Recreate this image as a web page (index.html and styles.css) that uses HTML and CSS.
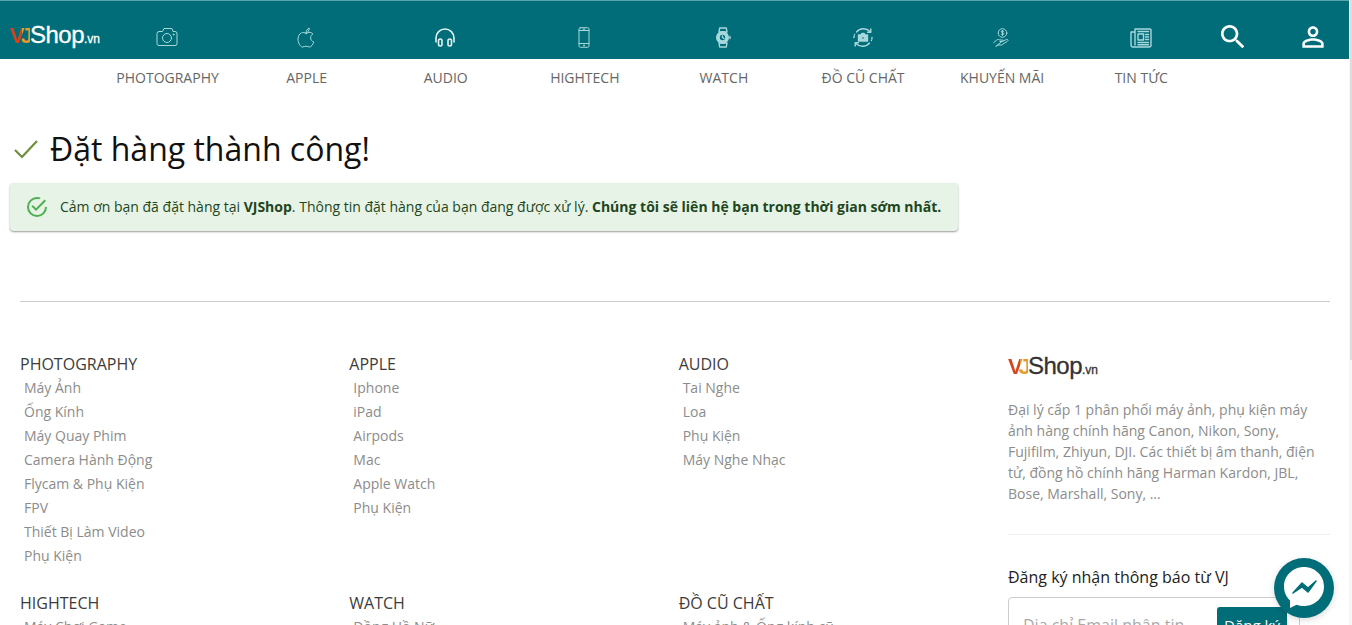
FILE: index.html
```html
<!DOCTYPE html>
<html lang="vi">
<head>
    <meta charset="UTF-8">
    <meta name="viewport" content="width=device-width, initial-scale=1.0">
    <title>Đặt hàng thành công - VJShop</title>
    <link rel="stylesheet" href="styles.css">
</head>
<body>
<div class="page">
    <div class="main">
        <header class="topbar">
            <a class="logo logo-light" href="#"><span class="logo-vj">VJ</span>Shop<small>.vn</small></a>
            <nav class="nav-icons">
                <a href="#"><svg class="icon" width="22" height="20" viewBox="0 0 22 20"><path d="M3 4.500h3.500l1.500-3h8l1 3h2a2 2 0 0 1 2 2v10a2 2 0 0 1-2 2H3a2 2 0 0 1-2-2v-10a2 2 0 0 1 2-2z"/><circle cx="11" cy="11" r="4.500"/><circle cx="17.500" cy="7.500" r=".5"/></svg></a>
                <a href="#"><svg class="icon" width="18" height="21" viewBox="0 0 18 21"><path d="M9 6.500c-1.500-1-3-1.300-4.500-.7C2.500 6.700 1 9 1 12c0 3.500 2.300 8 4.500 8 1.300 0 2-.8 3.500-.8s2.200.8 3.500.8c1.800 0 3.500-2.700 4.300-5-2-.8-3.200-2.300-3.200-4.200 0-1.600.9-3 2.300-3.800-1-1.300-2.400-1.800-3.800-1.600-1 .1-1.700.6-2.600 1.100z"/><path d="M9 6c0-2.200 1.200-4 3.200-5 .2 2.200-1 4.300-3.200 5z"/></svg></a>
                <a href="#"><svg class="icon icon-bold icon-bright" width="22" height="20" viewBox="0 0 22 20"><path d="M2 15v-4a9 9 0 0 1 18 0v4"/><rect x="4.500" y="12" width="3.500" height="7" rx="1.700"/><rect x="14" y="12" width="3.500" height="7" rx="1.700"/></svg></a>
                <a href="#"><svg class="icon" width="12" height="21" viewBox="0 0 12 21"><rect x="1" y=".7" width="10" height="19.600" rx="1.500"/><path d="M1 3.500h10M1 16.500h10M5 2.100h2"/><circle cx="6" cy="18.400" r=".6"/></svg></a>
                <a href="#"><svg class="icon icon-bold" width="16" height="21" viewBox="0 0 16 21"><path d="M4 5l.7-4h6.600l.7 4zM4 16l.7 4h6.600l.7-4z"/><circle cx="7.500" cy="10.500" r="5.800" fill="#a8d8dc"/><circle cx="7.500" cy="10.500" r="3.400" class="icon-face"/><path d="M7.500 9v1.500l1.300.8M15 9.500v2"/></svg></a>
                <a href="#"><svg class="icon icon-bold" width="22" height="21" viewBox="0 0 22 21"><path d="M4.500 5A9 9 0 0 1 18 4.500M17.500 16A9 9 0 0 1 4 16.500"/><path d="M18.800 2v3.200h-3.200M3.200 19v-3.200h3.200"/><path d="M2 10.500a9 9 0 0 1 .6-3M20 10.500a9 9 0 0 1-.6 3" stroke-dasharray="1.500 1.500"/><path d="M6.500 8h2.500l1-1.500h2l1 1.500h2.500v6h-9z" fill="#a8d8dc"/><circle cx="11" cy="11" r="1.500" class="icon-face"/></svg></a>
                <a href="#"><svg class="icon" width="17" height="19" viewBox="0 0 17 19"><circle cx="9.500" cy="5" r="4.300"/><path d="M9.500 2.500v5M8.200 6.300c.5.600 2.600.6 2.600-.6s-2.600-.9-2.600-2c0-1 2-1 2.600-.4"/><path d="M.8 14.500l3-2.500c1-.7 2-.7 3 0h2.700c1 0 1 1.500 0 1.500H7M9 13.500l4.500-2c1.500-.5 2.200 1 1 1.700L8.500 17H4.500l-1.500 1.300z"/></svg></a>
                <a href="#"><svg class="icon icon-bold" width="22" height="21" viewBox="0 0 22 21"><path d="M5 2h15a1 1 0 0 1 1 1v15a2 2 0 0 1-2 2H3a2 2 0 0 1-2-2V5h4zM5 5v13"/><path d="M8 4.500h10.500"/><rect x="8" y="7" width="5.500" height="6"/><path d="M15.500 7.500h3M15.500 10h3M15.500 12.500h3M8 15.500h10.500M8 17.700h10.500"/></svg></a>
            </nav>
            <div class="actions">
                <a href="#"><svg width="32" height="32" viewBox="0 0 24 24" fill="#fff"><path d="M15.500 14h-.79l-.28-.27C15.410 12.590 16 11.110 16 9.500 16 5.910 13.090 3 9.500 3S3 5.910 3 9.500 5.910 16 9.500 16c1.610 0 3.090-.59 4.230-1.570l.27.28v.79l5 4.990L20.490 19l-4.990-5zm-6 0C7.010 14 5 11.990 5 9.500S7.010 5 9.500 5 14 7.010 14 9.500 11.990 14 9.500 14z"/></svg></a>
                <a href="#"><svg width="32" height="32" viewBox="0 0 24 24" fill="#fff"><path d="M12 5.900c1.160 0 2.100.94 2.100 2.100s-.94 2.100-2.100 2.100S9.900 9.160 9.900 8s.94-2.100 2.100-2.100m0 9c2.970 0 6.100 1.460 6.100 2.100v1.100H5.900V17c0-.64 3.130-2.100 6.100-2.100M12 4C9.790 4 8 5.790 8 8s1.790 4 4 4 4-1.790 4-4-1.790-4-4-4zm0 9c-2.670 0-8 1.340-8 4v3h16v-3c0-2.660-5.330-4-8-4z"/></svg></a>
            </div>
        </header>
        <div class="nav-labels">
            <a href="#">PHOTOGRAPHY</a>
            <a href="#">APPLE</a>
            <a href="#">AUDIO</a>
            <a href="#">HIGHTECH</a>
            <a href="#">WATCH</a>
            <a href="#">ĐỒ CŨ CHẤT</a>
            <a href="#">KHUYẾN MÃI</a>
            <a href="#">TIN TỨC</a>
        </div>

        <section class="result">
            <h1><svg class="title-check" width="24" height="20" viewBox="0 0 24 20"><path d="M1 11l7 7L23 2"/></svg>Đặt hàng thành công!</h1>
            <div class="alert">
                <svg width="24" height="24" viewBox="0 0 24 24" fill="#4caf50"><path d="M20,12A8,8 0 0,1 12,20A8,8 0 0,1 4,12A8,8 0 0,1 12,4C12.760,4 13.500,4.110 14.200,4.310L15.770,2.740C14.610,2.260 13.340,2 12,2A10,10 0 0,0 2,12A10,10 0 0,0 12,22A10,10 0 0,0 22,12M7.910,10.080L6.500,11.500L11,16L21,6L19.590,4.580L11,13.170L7.910,10.080Z"/></svg>
                <p>Cảm ơn bạn đã đặt hàng tại <b>VJShop</b>. Thông tin đặt hàng của bạn đang được xử lý. <b>Chúng tôi sẽ liên hệ bạn trong thời gian sớm nhất.</b></p>
            </div>
        </section>

        <footer class="footer">
            <div class="footer-menu">
                <div class="menu-col">
                    <h4>PHOTOGRAPHY</h4>
                    <a href="#">Máy Ảnh</a>
                    <a href="#">Ống Kính</a>
                    <a href="#">Máy Quay Phim</a>
                    <a href="#">Camera Hành Động</a>
                    <a href="#">Flycam &amp; Phụ Kiện</a>
                    <a href="#">FPV</a>
                    <a href="#">Thiết Bị Làm Video</a>
                    <a href="#">Phụ Kiện</a>
                </div>
                <div class="menu-col">
                    <h4>APPLE</h4>
                    <a href="#">Iphone</a>
                    <a href="#">iPad</a>
                    <a href="#">Airpods</a>
                    <a href="#">Mac</a>
                    <a href="#">Apple Watch</a>
                    <a href="#">Phụ Kiện</a>
                </div>
                <div class="menu-col">
                    <h4>AUDIO</h4>
                    <a href="#">Tai Nghe</a>
                    <a href="#">Loa</a>
                    <a href="#">Phụ Kiện</a>
                    <a href="#">Máy Nghe Nhạc</a>
                </div>
                <div class="menu-col">
                    <h4>HIGHTECH</h4>
                    <a href="#">Máy Chơi Game</a>
                </div>
                <div class="menu-col">
                    <h4>WATCH</h4>
                    <a href="#">Đồng Hồ Nữ</a>
                </div>
                <div class="menu-col">
                    <h4>ĐỒ CŨ CHẤT</h4>
                    <a href="#">Máy ảnh &amp; Ống kính cũ</a>
                </div>
            </div>
            <aside class="footer-side">
                <a class="logo logo-dark" href="#"><span class="logo-vj">VJ</span>Shop<small>.vn</small></a>
                <p class="about">Đại lý cấp 1 phân phối máy ảnh, phụ kiện máy ảnh hàng chính hãng Canon, Nikon, Sony, Fujifilm, Zhiyun, DJI. Các thiết bị âm thanh, điện tử, đồng hồ chính hãng Harman Kardon, JBL, Bose, Marshall, Sony, ...</p>
                <hr>
                <div class="subscribe-title">Đăng ký nhận thông báo từ VJ</div>
                <form class="subscribe">
                    <input type="text" placeholder="Địa chỉ Email nhận tin">
                    <button type="button">Đăng ký</button>
                </form>
            </aside>
        </footer>

        <a class="messenger" href="#">
            <svg width="46" height="46" viewBox="0 0 46 46"><path fill="#fff" d="M23 2C12 2 3 10.500 3 21.500c0 5.500 2.200 10.500 6 14V43l6.500-3.300c2.300.8 4.800 1.300 7.500 1.300 11 0 20-8.500 20-19.500S34 2 23 2z"/><path fill="#006d79" stroke="#006d79" stroke-width="1.500" stroke-linejoin="round" d="M12 28l9-10 6 5 8-7-8 11-6-5z"/></svg>
        </a>
    </div>
    <div class="scrollbar"><div class="thumb"></div></div>
</div>
</body>
</html>
```

FILE: styles.css
```css
html, body {
    margin: 0;
    padding: 0;
    height: 100%;
    overflow: hidden;
    background-color: #fff;
}
body {
    font-family: "Open Sans", Arial, sans-serif;
    font-size: 14px;
    color: #222;
}
a {
    text-decoration: none;
    color: inherit;
}
.page {
    display: flex;
    height: 625px;
    overflow: hidden;
}
.main {
    position: relative;
    width: 1349px;
    flex: none;
}
.scrollbar {
    width: 3px;
    background-color: #f6f6f6;
}
.thumb {
    height: 360px;
    margin-left: 1px;
    background-color: #ddd;
}

/* header */
.topbar {
    display: flex;
    align-items: center;
    box-sizing: border-box;
    height: 59px;
    padding-top: 14px;
    background-color: #006d79;
    border-top: 1px solid #5da3ab;
}
.logo {
    display: block;
    font-family: "Liberation Sans", Arial, sans-serif;
    font-size: 24px;
    line-height: 26px;
    letter-spacing: -0.5px;
    white-space: nowrap;
    -webkit-text-stroke: 0.3px currentColor;
}
.logo small {
    font-size: 12px;
    letter-spacing: 0;
}
.logo-vj {
    font-size: 22px;
    font-weight: 700;
    letter-spacing: -4px;
    padding-right: 1px;
    color: transparent;
    -webkit-text-stroke: 0;
    background: linear-gradient(90deg, #d8431b 58%, #e59a2b 62%);
    -webkit-background-clip: text;
    background-clip: text;
}
.logo-light {
    width: 87.5px;
    padding-left: 10px;
    color: #fff;
    flex: none;
}
.logo-dark {
    color: #333;
}
.nav-icons {
    display: grid;
    grid-template-columns: repeat(8, 139.1px);
    flex: none;
}
.nav-icons a {
    display: flex;
    justify-content: center;
    align-items: center;
}
.icon {
    fill: none;
    stroke: #a8d8dc;
    stroke-width: 1;
    stroke-linecap: round;
    stroke-linejoin: round;
}
.icon-bold {
    stroke-width: 1.4;
}
.icon-bright {
    stroke: #e2f3f4;
    stroke-width: 1.6;
}
.icon-face {
    fill: #006d79;
}
.actions {
    display: flex;
    gap: 48px;
    padding-left: 7px;
}
.actions a {
    display: flex;
}
.nav-labels {
    display: grid;
    grid-template-columns: repeat(8, 139.1px);
    height: 38px;
    padding-left: 98px;
    line-height: 38px;
    text-align: center;
    color: #666;
}

/* order result */
.result {
    padding: 30px 10px 0;
}
h1 {
    display: flex;
    align-items: center;
    gap: 12px;
    margin: 0 0 12px;
    padding-left: 4px;
    font-size: 32px;
    line-height: 44px;
    font-weight: 400;
    color: #111;
}
.title-check {
    fill: none;
    stroke: #6f8f3c;
    stroke-width: 2.200;
}
.alert {
    display: flex;
    align-items: center;
    gap: 11px;
    width: 948px;
    box-sizing: border-box;
    height: 48px;
    padding: 0 15px 1px;
    background-color: #e6f3e6;
    border-radius: 4px;
    box-shadow: 0 1px 2px rgba(0, 0, 0, 0.4);
    color: #1e4620;
}
.alert p {
    margin: 0;
    line-height: 21px;
}

/* footer */
.footer {
    display: grid;
    grid-template-columns: 988px 322px;
    margin: 70px 19px 0 20px;
    padding-top: 50px;
    border-top: 1px solid #ccc;
}
.footer-menu {
    display: grid;
    grid-template-columns: repeat(3, 1fr);
    row-gap: 23px;
    align-content: start;
}
.menu-col a {
    display: block;
    padding-left: 4px;
    line-height: 24px;
    color: #8c8c8c;
}
h4 {
    margin: 0;
    font-size: 16px;
    line-height: 24px;
    font-weight: 400;
    color: #3c3c3c;
}
.footer-side .logo {
    margin-top: 1px;
}
.about {
    margin: 16px 0 0;
    line-height: 21px;
    color: #8c8c8c;
}
hr {
    margin: 30px 0 0;
    border: none;
    border-top: 1px solid #eee;
}
.subscribe-title {
    margin-top: 30px;
    font-size: 16px;
    line-height: 24px;
    color: #222;
}
.subscribe {
    display: flex;
    align-items: flex-start;
    box-sizing: border-box;
    width: 292px;
    height: 56px;
    margin-top: 8px;
    padding: 9px 12px 0 14px;
    border: 1px solid #ccc;
    border-radius: 4px;
}
.subscribe input {
    flex: 1;
    min-width: 0;
    margin-top: 3px;
    padding: 0;
    border: none;
    outline: none;
    font-family: inherit;
    font-size: 16px;
    line-height: 30px;
}
.subscribe input::placeholder {
    color: #aaa;
}
.subscribe button {
    flex: none;
    width: 70px;
    height: 36px;
    padding: 0;
    border: none;
    border-radius: 3px;
    background-color: #006d79;
    color: #fff;
    font-family: inherit;
    font-size: 15px;
}

/* floating chat button */
.messenger {
    position: absolute;
    top: 558px;
    left: 1274px;
    display: flex;
    align-items: center;
    justify-content: center;
    width: 60px;
    height: 60px;
    border-radius: 50%;
    background-color: #006d79;
    box-shadow: 0 2px 6px rgba(0, 0, 0, 0.15);
}
```
